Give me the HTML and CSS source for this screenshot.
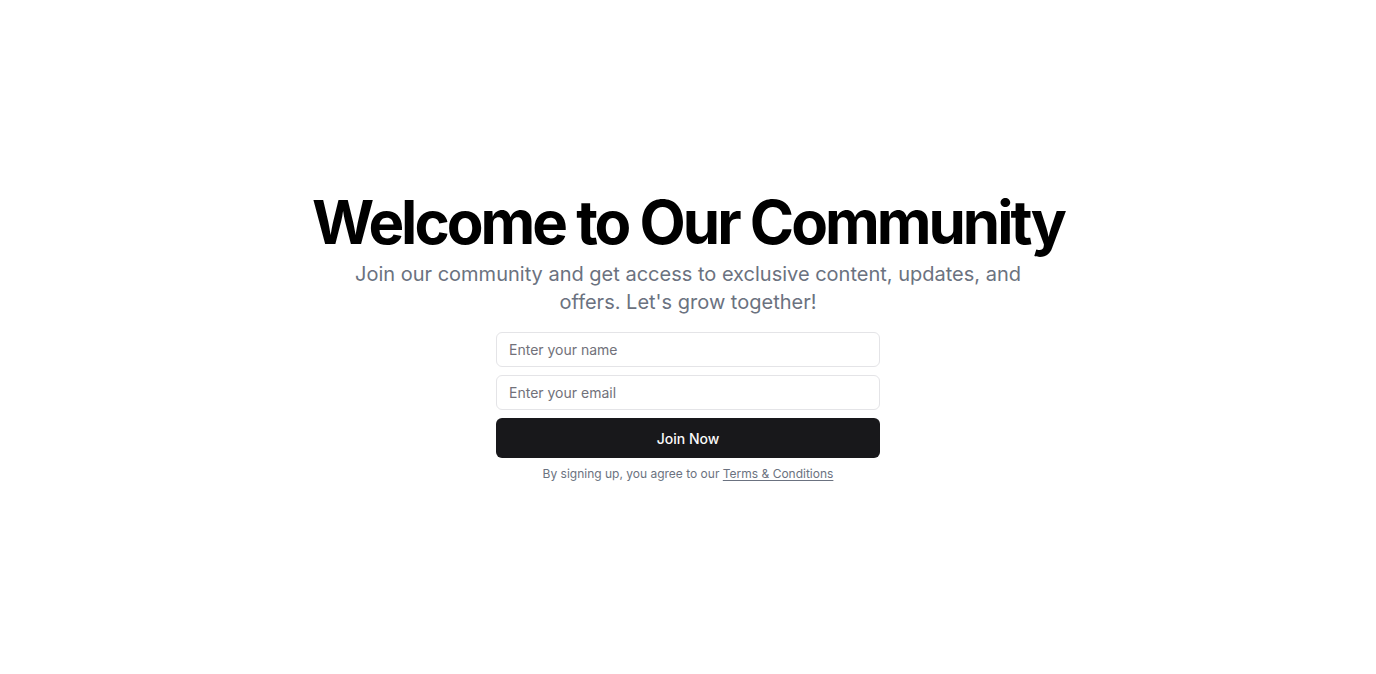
FILE: index.html
```html
<!DOCTYPE html>
<html lang="en">
<head>
<meta charset="utf-8">
<title>Welcome to Our Community</title>
<link rel="stylesheet" href="styles.css">
</head>
<body>
<main class="page">
  <section class="hero">
    <div class="intro">
      <h1 class="title">Welcome to Our Community</h1>
      <p class="lead">Join our community and get access to exclusive content, updates, and offers. Let's grow together!</p>
    </div>
    <form class="form">
      <input class="input" type="text" placeholder="Enter your name">
      <input class="input" type="email" placeholder="Enter your email">
      <button class="button" type="submit">Join Now</button>
      <p class="note">By signing up, you agree to our <a class="link" href="#">Terms &amp; Conditions</a></p>
    </form>
  </section>
</main>
</body>
</html>
```
FILE: styles.css
```css
* { box-sizing: border-box; }
html, body { margin: 0; padding: 0; background: #fff; }
body { font-family: Inter, "Noto Sans", sans-serif; color: #09090b; }
.page {
  height: 100vh;
  display: flex;
  align-items: center;
  justify-content: center;
}
.hero {
  display: flex;
  flex-direction: column;
  align-items: center;
  gap: 16px;
  text-align: center;
}
.intro { display: flex; flex-direction: column; align-items: center; gap: 8px; }
.title {
  margin: 0;
  font-size: 60px;
  line-height: 1;
  font-weight: 700;
  letter-spacing: -0.05em;
  color: #000;
}
.lead {
  margin: 0;
  max-width: 700px;
  font-size: 20px;
  line-height: 28px;
  color: #6b7280;
}
.form {
  width: 384px;
  display: flex;
  flex-direction: column;
  gap: 8px;
}
.input {
  height: 35px;
  width: 100%;
  border: 1px solid #e4e4e7;
  border-radius: 6px;
  padding: 0 12px;
  font-family: inherit;
  font-size: 14px;
  color: #09090b;
  background: #fff;
  outline: none;
}
.input::placeholder { color: #71717a; }
.button {
  height: 40px;
  width: 100%;
  border: 0;
  border-radius: 6px;
  background: #18181b;
  color: #fafafa;
  font-family: inherit;
  font-size: 14px;
  font-weight: 500;
  cursor: pointer;
}
.note {
  margin: 0;
  font-size: 12px;
  line-height: 16px;
  color: #6b7280;
}
.link {
  color: inherit;
  text-decoration: underline;
  text-underline-offset: 2px;
}
```
